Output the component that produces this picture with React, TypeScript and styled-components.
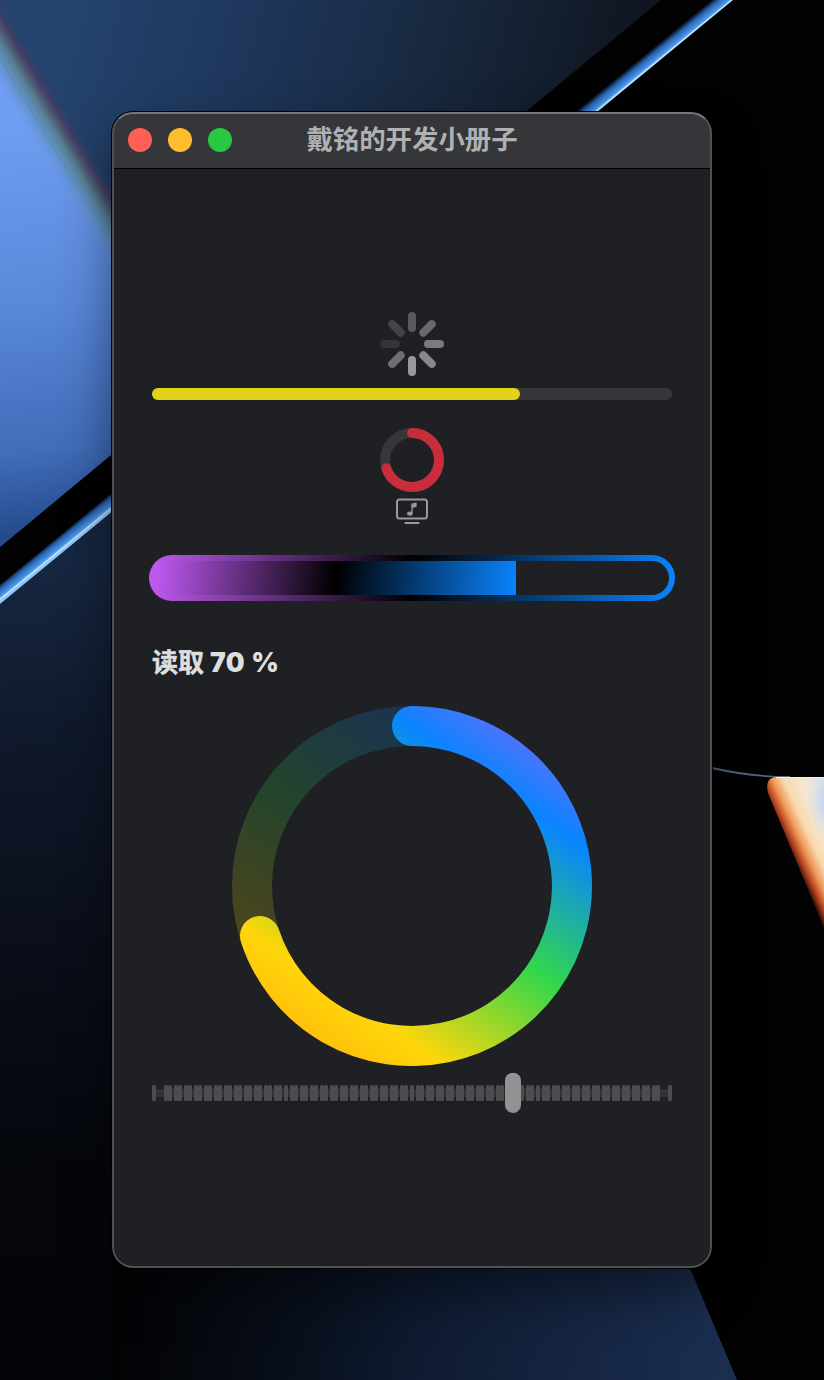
import React from "react";
import styled, { createGlobalStyle } from "styled-components";

const GlobalStyle = createGlobalStyle`
  * { box-sizing: border-box; }
  html, body { margin: 0; padding: 0; background: #000; }
`;

const Desktop = styled.div`
  position: relative;
  width: 824px;
  height: 1380px;
  padding: 112px;
  overflow: hidden;
  font-family: Inter, "Noto Sans CJK SC", sans-serif;
`;

const WallpaperSvg = styled.svg`
  position: absolute;
  inset: 0;
`;

const Window = styled.main`
  position: relative;
  width: 600px;
  height: 1156px;
  display: flex;
  flex-direction: column;
  border-radius: 21px;
  overflow: hidden;
  background: #1f2023;
  &::after {
    content: "";
    position: absolute;
    inset: 0;
    border: 2px solid #4f5053;
    border-top-color: #77787b;
    border-radius: 21px;
    pointer-events: none;
  }
`;

const WindowShadow = styled.div`
  position: relative;
  border-radius: 21px;
  box-shadow: 0 0 0 1px #000, 0 24px 50px rgba(0, 0, 0, 0.45);
`;

const TitleBar = styled.header`
  display: grid;
  grid-template-columns: 108px 1fr 108px;
  align-items: center;
  height: 57px;
  flex: none;
  padding: 0 16px;
  background: #353639;
  border-bottom: 1px solid #000;
`;

const Lights = styled.div`
  display: flex;
  gap: 16px;
`;

const Light = styled.span<{ $color: string }>`
  width: 24px;
  height: 24px;
  border-radius: 50%;
  background: ${(p) => p.$color};
`;

const Title = styled.h1`
  margin: 0;
  padding-bottom: 3px;
  text-align: center;
  font-size: 26.4px;
  line-height: 36px;
  font-weight: 700;
  color: #afb0b2;
  white-space: nowrap;
`;

const Content = styled.section`
  display: flex;
  flex-direction: column;
  align-items: center;
  padding: 143px 40px 0;
`;

const Track = styled.div`
  width: 520px;
  height: 12px;
  margin: 12px 0 28px;
  border-radius: 6px;
  background: #373739;
`;

const Fill = styled.div`
  width: 368px;
  height: 12px;
  border-radius: 6px;
  background: #e1d31b;
`;

const MusicIcon = styled.svg`
  margin-top: 6px;
`;

const Capsule = styled.div`
  width: 526px;
  height: 46px;
  margin-top: 31px;
  padding: 6px;
  border-radius: 23px;
  overflow: hidden;
  background: linear-gradient(94deg, #bf5af2, #000 50%, #0a84ff);
`;

const CapsuleHole = styled.div`
  width: 514px;
  height: 34px;
  border-radius: 0 17px 17px 0;
  overflow: hidden;
  background: #1f2023;
`;

const CapsuleFill = styled.div`
  width: 361px;
  height: 34px;
  background: linear-gradient(96deg, #bf5af2, #000 50%, #0a84ff);
`;

const Label = styled.p`
  align-self: flex-start;
  margin: 41px 0 0;
  height: 42px;
  line-height: 40px;
  font-size: 26px;
  font-weight: 700;
  color: #dededf;
  white-space: pre;
  -webkit-text-stroke: 0.5px #dededf;
`;

const Percent = styled.span`
  font-size: 26.5px;
  font-weight: 900;
  letter-spacing: 0.6px;
  -webkit-text-stroke: 0;
`;

const Gauge = styled.svg`
  margin-top: 22px;
`;

const Slider = styled.div`
  position: relative;
  display: flex;
  align-items: center;
  width: 520px;
  height: 40px;
  margin-top: 7px;
`;

const Rail = styled.span`
  width: 8px;
  height: 8px;
  background: #323335;
`;

const Group = styled.div`
  display: flex;
  gap: 2px;
  background: linear-gradient(#323335, #323335) center / 100% 8px no-repeat;
`;

const Tick = styled.span`
  width: 4px;
  height: 16px;
  border-radius: 1.5px;
  background: #4c4d4f;
`;

const Pair = styled.span`
  display: flex;
  background: linear-gradient(#4c4d4f, #4c4d4f) center / 100% 13px no-repeat;
`;

const Knob = styled.div`
  position: absolute;
  left: 353px;
  top: 0;
  width: 16px;
  height: 40px;
  border-radius: 8px;
  background: #919294;
  box-shadow: 0 0 1px rgba(0, 0, 0, 0.5), inset 0 1px 0 #a2a3a5;
`;

const Wallpaper = () => (
  <WallpaperSvg width="824" height="1380" viewBox="0 0 824 1380">
    <defs>
      <linearGradient id="sky" gradientUnits="userSpaceOnUse" x1="60" y1="0" x2="620" y2="160">
        <stop offset="0" stopColor="#25446f" />
        <stop offset="0.35" stopColor="#1e3559" />
        <stop offset="0.7" stopColor="#172539" />
        <stop offset="1" stopColor="#0f141e" />
      </linearGradient>
      <linearGradient id="blade" gradientUnits="userSpaceOnUse" x1="30" y1="120" x2="80" y2="530">
        <stop offset="0" stopColor="#6f9df0" />
        <stop offset="0.45" stopColor="#5988d9" />
        <stop offset="0.8" stopColor="#406cb8" />
        <stop offset="1" stopColor="#23498a" />
      </linearGradient>
      <linearGradient id="prism" gradientUnits="userSpaceOnUse" x1="0" y1="84" x2="38" y2="61">
        <stop offset="0" stopColor="#6494d8" stopOpacity="0" />
        <stop offset="0.32" stopColor="#6090bd" />
        <stop offset="0.5" stopColor="#567f93" />
        <stop offset="0.66" stopColor="#4c5670" />
        <stop offset="0.78" stopColor="#453d66" />
        <stop offset="1" stopColor="#25406c" stopOpacity="0" />
      </linearGradient>
      <linearGradient id="edge" gradientUnits="userSpaceOnUse" x1="356" y1="290.4" x2="365.5" y2="302">
        <stop offset="0" stopColor="#1d4f92" stopOpacity="0" />
        <stop offset="0.35" stopColor="#2763b0" />
        <stop offset="0.8" stopColor="#4f9bec" />
        <stop offset="0.88" stopColor="#c6e6ff" />
        <stop offset="1" stopColor="#8cc6f8" />
      </linearGradient>
      <linearGradient id="lower" gradientUnits="userSpaceOnUse" x1="50" y1="570" x2="90" y2="1380">
        <stop offset="0" stopColor="#162640" />
        <stop offset="0.2" stopColor="#10192b" />
        <stop offset="0.5" stopColor="#090d17" />
        <stop offset="0.75" stopColor="#04060b" />
        <stop offset="1" stopColor="#030509" />
      </linearGradient>
      <linearGradient id="floor" gradientUnits="userSpaceOnUse" x1="100" y1="1330" x2="720" y2="1380">
        <stop offset="0" stopColor="#0a1322" stopOpacity="0" />
        <stop offset="0.5" stopColor="#0e1a30" />
        <stop offset="1" stopColor="#1b2e50" />
      </linearGradient>
      <linearGradient id="flare" gradientUnits="userSpaceOnUse" x1="788" y1="847" x2="836" y2="825">
        <stop offset="0" stopColor="#3a0f0c" />
        <stop offset="0.12" stopColor="#b8461f" />
        <stop offset="0.26" stopColor="#ee9556" />
        <stop offset="0.45" stopColor="#f8d9ac" />
        <stop offset="0.7" stopColor="#f6e6cd" />
        <stop offset="1" stopColor="#eee7dc" />
      </linearGradient>
      <radialGradient
        id="glow" gradientUnits="userSpaceOnUse" cx="0" cy="0" r="1"
        gradientTransform="translate(830 800) scale(26 46)"
      >
        <stop offset="0" stopColor="#a9cdf5" />
        <stop offset="1" stopColor="#d5e3ef" stopOpacity="0" />
      </radialGradient>
    </defs>
    <rect width="824" height="1380" fill="#020203" />
    <path d="M0 0H661L0 547Z" fill="url(#sky)" />
    <path d="M0 60L112 245V454L0 547Z" fill="url(#blade)" />
    <path d="M0 0L112 178V272L0 87Z" fill="url(#prism)" />
    <path d="M0 604L112 512V1380H0Z" fill="url(#lower)" />
    <path d="M0 585L712 0H733L0 604Z" fill="url(#edge)" />
    <path d="M0 1240H678L737 1380H0Z" fill="url(#floor)" />
    <path d="M712 768Q752 777 790 777" fill="none" stroke="#52647c" strokeWidth="1.8" />
    <path d="M824 777H778Q764 777 768 793L824 928Z" fill="url(#flare)" />
    <path d="M800 778H824V850Z" fill="url(#glow)" />
    <path d="M776 777.5H824" stroke="#fff0dc" strokeWidth="1" />
  </WallpaperSvg>
);

const SPOKES = ["#59595b", "#69696b", "#7a7b7c", "#878889", "#98999b", "#6e6f71", "#343538", "#444548"];

const Spinner = () => (
  <svg width="64" height="64" viewBox="-32 -32 64 64">
    {SPOKES.map((color, i) => (
      <rect key={i} x="-4" y="-32" width="8" height="20" rx="4" fill={color} transform={`rotate(${i * 45})`} />
    ))}
  </svg>
);

const SmallRing = () => (
  <svg width="64" height="64" viewBox="0 0 64 64" fill="none" strokeWidth="10">
    <circle cx="32" cy="32" r="27" stroke="#373739" />
    <circle
      cx="32" cy="32" r="27" stroke="#c92c3b" strokeLinecap="round"
      pathLength="100" strokeDasharray="70 100" transform="rotate(-90 32 32)"
    />
  </svg>
);

const BigRing = () => (
  <Gauge width="360" height="360" viewBox="-180 -180 360 360" fill="none" strokeWidth="40">
    <defs>
      <linearGradient id="rainbow" gradientUnits="userSpaceOnUse" x1="-148" y1="215" x2="148" y2="-215">
        <stop offset="0" stopColor="#ff9f0a" />
        <stop offset="0.25" stopColor="#ffd60a" />
        <stop offset="0.5" stopColor="#32d74b" />
        <stop offset="0.75" stopColor="#0a84ff" />
        <stop offset="1" stopColor="#b05cf4" />
      </linearGradient>
    </defs>
    <circle r="160" stroke="url(#rainbow)" opacity="0.2" />
    <path d="M0 -160A160 160 0 1 1 -152.01 50" stroke="url(#rainbow)" strokeLinecap="round" />
  </Gauge>
);

const TickGroup = () => (
  <>
    {Array.from({ length: 12 }, (_, i) => (
      <Pair key={i}><Tick /><Tick /></Pair>
    ))}
  </>
);

export default function App() {
  return (
    <>
      <GlobalStyle />
      <Desktop>
        <Wallpaper />
        <WindowShadow>
          <Window>
            <TitleBar>
              <Lights>
                <Light $color="#ff5f57" />
                <Light $color="#febc2e" />
                <Light $color="#28c840" />
              </Lights>
              <Title>戴铭的开发小册子</Title>
            </TitleBar>
            <Content>
              <Spinner />
              <Track><Fill /></Track>
              <SmallRing />
              <MusicIcon width="32" height="26" viewBox="0 0 32 26" fill="none" stroke="#98999b">
                <rect x="1" y="1.5" width="30" height="19" rx="2.5" strokeWidth="2" />
                <path d="M9.5 25H22.5" strokeWidth="2" strokeLinecap="round" />
                <path d="M16 15.5V6.3L20 5.3V8.2L16 9.2" strokeWidth="1.4" fill="#98999b" strokeLinejoin="round" />
                <ellipse cx="13.9" cy="15.6" rx="2.8" ry="2.2" fill="#98999b" stroke="none" />
              </MusicIcon>
              <Capsule>
                <CapsuleHole><CapsuleFill /></CapsuleHole>
              </Capsule>
              <Label>读取<Percent> 70 %</Percent></Label>
              <BigRing />
              <Slider>
                <Tick />
                <Rail />
                <Group>
                  <TickGroup /><Tick /><TickGroup /><Tick /><TickGroup /><Tick /><TickGroup />
                </Group>
                <Rail />
                <Tick />
                <Knob />
              </Slider>
            </Content>
          </Window>
        </WindowShadow>
      </Desktop>
    </>
  );
}
